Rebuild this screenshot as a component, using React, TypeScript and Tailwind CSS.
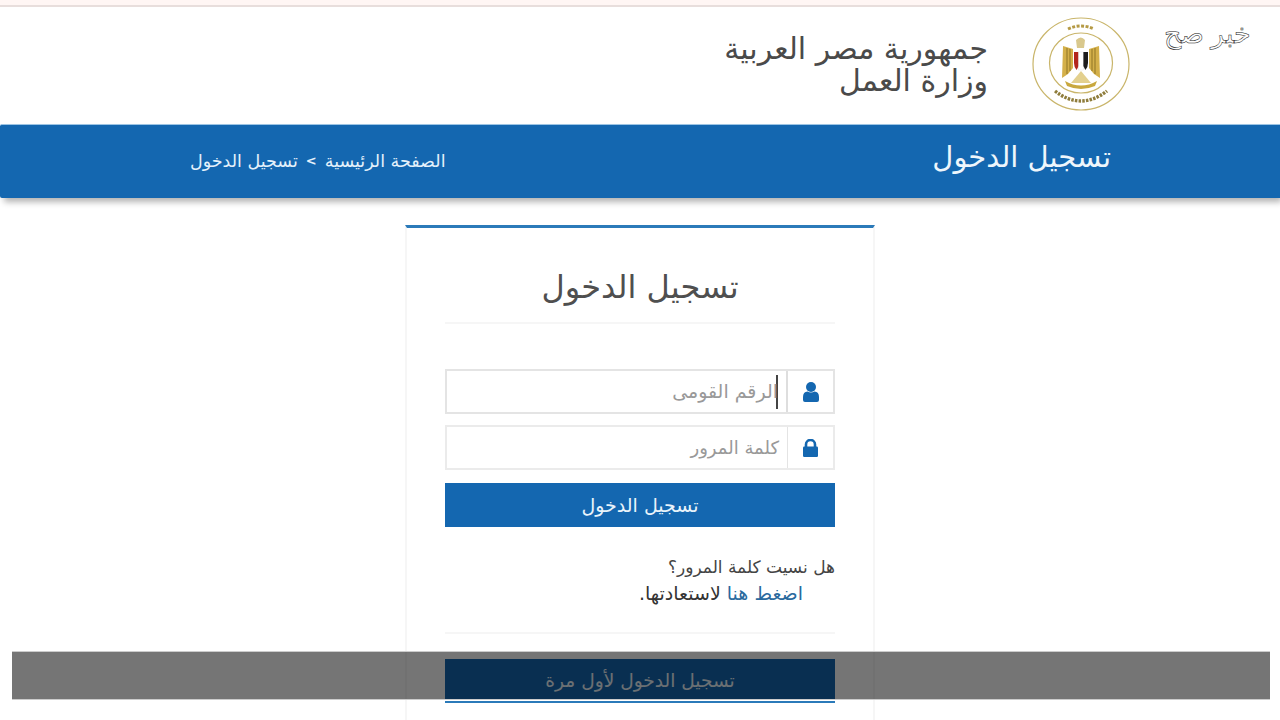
import React from "react";

const Emblem = () => (
  <svg width="100" height="96" viewBox="0 0 100 96" aria-hidden="true">
    <ellipse cx="50" cy="48" rx="48" ry="46" fill="#fff" stroke="#c9b56a" strokeWidth="1.2" />
    <ellipse cx="50" cy="47" rx="31.5" ry="30" fill="#fff" stroke="#c9b56a" strokeWidth="1.2" />
    <path d="M32 30 L42 33 L42 52 L37 58 L31 62 Z" fill="#d4b04a" />
    <path d="M68 30 L58 33 L58 52 L63 58 L69 62 Z" fill="#d4b04a" />
    <path d="M36 32v26M39 33v22M61 33v22M64 32v26" stroke="#8f7425" strokeWidth="1" />
    <path d="M45 24 q5 -5 9 0 l-1 8 h-7 Z" fill="#d9c88c" />
    <path d="M43 36 h4.6 v14 l-2 4 q-2.6 -3 -2.6 -7 Z" fill="#b3261e" />
    <rect x="47.6" y="36" width="4.8" height="18" fill="#fff" stroke="#ddd" strokeWidth="0.4" />
    <path d="M52.4 36 h4.6 v11 q0 4 -2.6 7 l-2 -4 Z" fill="#1c1c1c" />
    <path d="M50 55 L40 67 L60 67 Z" fill="#e3d08e" />
    <path d="M34 65 q16 9 32 0 l-2 5 q-14 6 -28 0 Z" fill="#c9a83e" />
    <path d="M37 13 q13 -6 26 0" fill="none" stroke="#b59a45" strokeWidth="3" strokeDasharray="3 1.5" />
    <path d="M24 75 q26 20 52 0" fill="none" stroke="#8f7d3c" strokeWidth="3.4" strokeDasharray="2.5 1.2" />
  </svg>
);

const UserIcon = () => (
  <svg width="16" height="20" viewBox="0 0 16 20" aria-hidden="true">
    <ellipse cx="8" cy="5" rx="5" ry="5" fill="#1467b0" />
    <path d="M0 18 v-3 q0 -5 4.5 -5.4 q3.5 1.8 7 0 q4.5 .4 4.5 5.4 v3 q0 2 -2 2 h-12 q-2 0 -2 -2 Z" fill="#1467b0" />
  </svg>
);

const LockIcon = () => (
  <svg width="15" height="18" viewBox="0 0 15 18" aria-hidden="true">
    <path d="M3 8 V5.5 a4.5 4.5 0 0 1 9 0 V8" fill="none" stroke="#1467b0" strokeWidth="2.6" />
    <rect x="0" y="7.5" width="15" height="10.5" rx="1.2" fill="#1467b0" />
  </svg>
);

export default function App() {
  return (
    <div
      dir="rtl"
      className="relative h-[720px] w-[1280px] overflow-hidden bg-white text-[#444] [font-family:'DejaVu_Sans','Noto_Sans',sans-serif]"
    >
      {/* top strip */}
      <div className="h-[7px] border-b-2 border-[#e8dedc] bg-[#fff6f4]" />

      {/* Header */}
      <header className="flex h-[117px] items-start">
        <div className="w-[135px] pt-[12px] pr-[29px] [font-family:'Liberation_Serif',serif] text-[27px] leading-[30px]">
          <span className="text-white [-webkit-text-stroke:0.5px_#111]">خبر صح</span>
        </div>
        <div className="mt-[9px] mr-[14px] ml-[43px]">
          <Emblem />
        </div>
        <div className="pt-[26px] text-[30px] leading-[32px] text-[#4a4a4a]">
          <div>جمهورية مصر العربية</div>
          <div>وزارة العمل</div>
        </div>
      </header>

      {/* Blue title bar */}
      <div className="flex h-[74px] items-center justify-between rounded-l-[2px] border-t border-[#9cc4e4] bg-[#1467b0] pr-[169px] pl-[190px] text-white shadow-[3px_5px_6px_-1px_rgba(0,0,0,0.3)]">
        <h1 className="pb-[8px] text-[29px] leading-none font-normal text-[#eef6fc]">تسجيل الدخول</h1>
        <div className="flex items-center gap-[8px] pb-[1px] text-[17.5px] text-[#e4f1fb]">
          <span>الصفحة الرئيسية</span>
          <span className="text-[13px] font-bold">&gt;</span>
          <span>تسجيل الدخول</span>
        </div>
      </div>

      {/* Login card */}
      <main className="mt-[27px] flex justify-center">
        <div className="h-[520px] w-[470px] border-x-2 border-t-[3px] border-x-[#f6f6f6] border-t-[#2b7ab9] px-[38px]">
          <h2 className="flex h-[96px] items-center justify-center border-b-2 border-[#f6f6f6] pt-[24px] text-[32px] font-normal text-[#4f4f4f]">
            تسجيل الدخول
          </h2>

          <div className="mt-[45px] flex h-[45px] border-2 border-[#e4e4e4]">
            <div className="flex w-[47px] items-center justify-center border-l-2 border-[#dedede] bg-white">
              <UserIcon />
            </div>
            <div className="flex flex-1 items-center pr-[8px] text-[19px] text-[#999]">
              <span className="h-[34px] w-[2px] bg-[#444]" />
              <span className="mr-[-2px]">الرقم القومى</span>
            </div>
          </div>

          <div className="mt-[11px] flex h-[45px] border-2 border-[#ebebeb]">
            <div className="flex w-[46px] items-center justify-center border-l border-[#e4e4e4] bg-white">
              <LockIcon />
            </div>
            <div className="flex flex-1 items-center pr-[8px] pb-[1px] text-[18px] text-[#999]">كلمة المرور</div>
          </div>

          <button className="mt-[13px] h-[44px] w-full bg-[#1467b0] text-[19px] text-[#eaf4fb]">
            تسجيل الدخول
          </button>

          <div className="mt-[27px] text-[17px] leading-[26px] text-[#444]">
            <div>هل نسيت كلمة المرور؟</div>
            <div className="pr-[32px] text-[19px] text-[#333]">
              <span className="text-[#2a6a9e]">اضغط هنا</span> لاستعادتها.
            </div>
          </div>

          <div className="mt-[26px] border-t-2 border-[#f6f6f6]" />

          <div className="mt-[25px] border-b-2 border-[#2b7ab9] pb-[1px]">
            <button className="h-[41px] w-full bg-[#1467b0] pt-[2px] text-[18.6px] text-[#eaf4fb]">
              تسجيل الدخول لأول مرة
            </button>
          </div>
        </div>
      </main>

      {/* dark band over the page */}
      <div className="absolute top-[651px] left-[12px] h-[49px] w-[1258px] border-t border-b border-[#ccc] bg-[rgba(0,0,0,0.54)]" />
    </div>
  );
}
